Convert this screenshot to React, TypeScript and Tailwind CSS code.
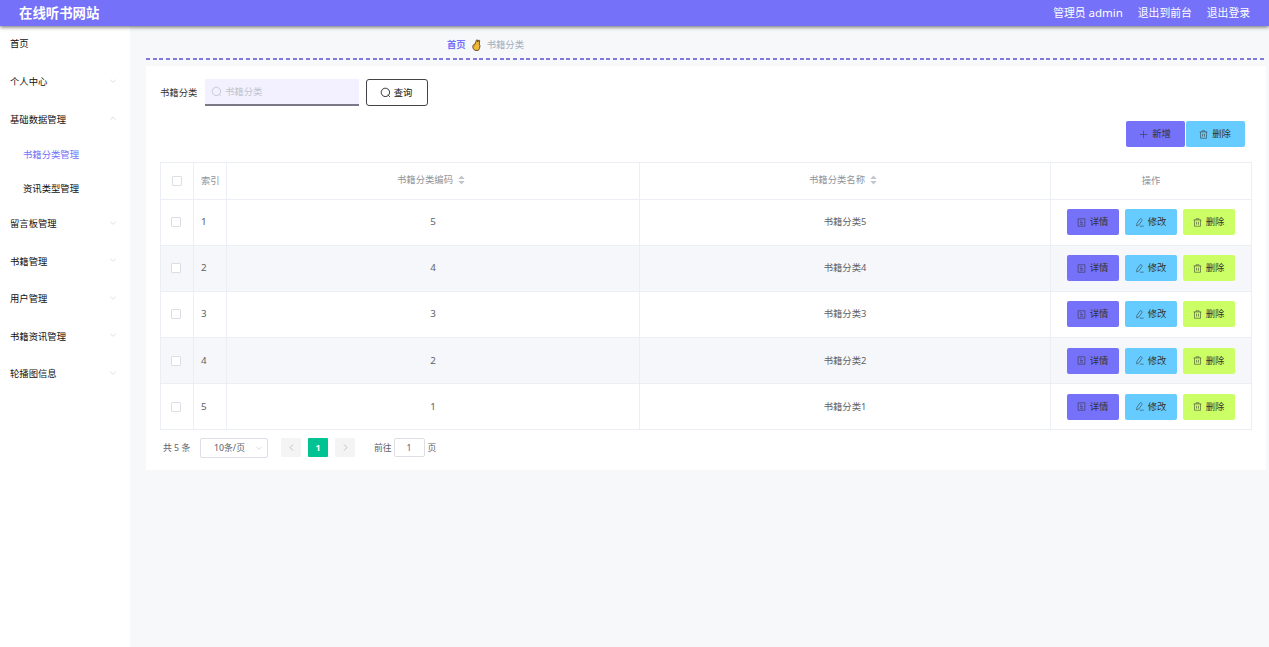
import type { ReactNode } from 'react';

const menus = [
  { name: '个人中心' },
  { name: '基础数据管理', open: true, children: ['书籍分类管理', '资讯类型管理'] },
  { name: '留言板管理' },
  { name: '书籍管理' },
  { name: '用户管理' },
  { name: '书籍资讯管理' },
  { name: '轮播图信息' },
];

const rows = [
  { index: 1, code: 5, name: '书籍分类5' },
  { index: 2, code: 4, name: '书籍分类4' },
  { index: 3, code: 3, name: '书籍分类3' },
  { index: 4, code: 2, name: '书籍分类2' },
  { index: 5, code: 1, name: '书籍分类1' },
];

const paths = {
  up: 'M2 8.5 6 4.5l4 4',
  down: 'M2 4 6 8l4-4',
  left: 'M8 2 4 6l4 4',
  right: 'M4 2l4 4-4 4',
  plus: 'M6 1v10M1 6h10',
  search: 'M8.7 9.5A4.6 4.6 0 1 1 9.5 8.7M8.4 8.4l2.4 2.4',
  trash: 'M.8 2.6h10.4M4 2.6V1h4v1.6M2 2.6V11h8V2.6M4.7 5v3.8M7.3 5v3.8',
  detail: 'M1.5 1h9v10h-9zM4 3.8h2.5M4 6h4M4 8.3h4',
  edit: 'M2.4 7.4 6.7 1.2Q7.4.5 8.2 1L9.2 1.8Q9.9 2.4 9.4 3.2L5.1 9.3 2.2 10.6zM6.5 10.9h5',
};

function Icon({ name, className }: { name: keyof typeof paths; className?: string }) {
  return (
    <svg viewBox="0 0 12 12" fill="none" stroke="currentColor" strokeWidth="0.9" className={`shrink-0 ${className}`}>
      <path d={paths[name]} />
    </svg>
  );
}

function Hand() {
  return (
    <svg viewBox="0 0 9 12" className="mx-[6px] h-[12px] w-[9px]">
      <path
        d="M2 5.2 3.3 5 4.3 1.2Q5 .3 5.6 1.1L5.7 3 6.6 1.3Q7.6.8 7.7 1.8L7.2 5 8 6.8 7.5 9.5 6.3 11.4H3L1 9.5.8 7Z"
        fill="#f0b93a"
        stroke="#4a3512"
        strokeWidth="0.8"
      />
      <path d="M2.5 5.5v2" fill="none" stroke="#a8700f" strokeWidth="0.6" />
    </svg>
  );
}

function Checkbox() {
  return <span className="block h-[10px] w-[10px] rounded-[1px] border border-[#dcdfe6] bg-white" />;
}

function Sort() {
  return (
    <svg viewBox="0 0 7 10" className="ml-[5px] h-[10px] w-[7px] fill-[#c0c4cc]">
      <path d="M.3 4 3.5.6 6.7 4zM.3 6 3.5 9.4 6.7 6z" />
    </svg>
  );
}

function Action({ icon, color, children }: { icon: keyof typeof paths; color: string; children: ReactNode }) {
  return (
    <button className={`flex h-[26px] items-center justify-center gap-[4px] rounded-[2px] pr-px text-[#333] ${color}`}>
      <Icon name={icon} className="h-[9px] w-[9px] opacity-80" />
      {children}
    </button>
  );
}

const grid = 'grid grid-cols-[33px_33px_413px_411px_1fr]';
const cell = 'flex items-center border-r border-[#ebeef5]';

export default function App() {
  return (
    <div className="flex h-[647px] w-[1269px] flex-col overflow-hidden bg-[#f6f8fa] font-['Noto_Sans','Noto_Sans_CJK_SC',sans-serif] text-[9.33px] leading-[14px] text-[#606266]">
      <header className="relative z-10 flex h-[26px] shrink-0 items-center justify-between bg-[#7571f9] pr-[19px] pl-[19px] text-white shadow-[0_1px_4px_rgba(0,0,0,0.6)]">
        <h1 className="text-[13.4px] font-bold">在线听书网站</h1>
        <nav className="flex gap-[15px] text-[10.8px]">
          <span>
            管理员 <span className="text-[11.5px]">admin</span>
          </span>
          <span>退出到前台</span>
          <span>退出登录</span>
        </nav>
      </header>

      <div className="flex flex-1">
        <aside className="w-[130px] shrink-0 bg-white text-[#111]">
          <div className="flex h-[37.5px] items-center pb-[2px] pl-[10px]">首页</div>
          {menus.map((menu) => (
            <div key={menu.name}>
              <div className="flex h-[37.5px] items-center justify-between pr-[13px] pl-[10px]">
                {menu.name}
                <Icon name={menu.open ? 'up' : 'down'} className="mb-[3px] h-[8px] w-[8px] text-[#c9cbd0]" />
              </div>
              {menu.children?.map((child, i) => (
                <div
                  key={child}
                  className={`flex h-[33.5px] items-center pl-[23px] ${i === 0 ? 'pb-px text-[#7571f9]' : ''}`}
                >
                  {child}
                </div>
              ))}
            </div>
          ))}
        </aside>

        <main className="flex-1 pr-[3px] pl-[16px]">
          <div className="flex h-[31.5px] items-center pt-[6px] pl-[301px]">
            <span className="font-bold text-[#7571f9]">首页</span>
            <Hand />
            <span className="text-[#a4adbd]">书籍分类</span>
          </div>
          <div className="h-[2px] bg-[repeating-linear-gradient(90deg,#7f7bd6_0_4px,transparent_4px_6.67px)]" />

          <section className="mt-[6.5px] h-[404px] bg-white px-[14px] pt-[13px]">
            <div className="flex items-center">
              <span className="w-[45px] text-[#333]">书籍分类</span>
              <div className="flex h-[27px] w-[154px] items-center gap-[3px] border-b-2 border-[#7b7988] bg-[#f3f1ff] pl-[6px] text-[#c0c4cc]">
                <Icon name="search" className="h-[11px] w-[11px]" />
                书籍分类
              </div>
              <button className="ml-[7px] flex h-[27px] w-[62px] items-center justify-center gap-[3px] rounded-[3px] border border-[#444] pr-[2px] text-[#111]">
                <Icon name="search" className="h-[11px] w-[11px]" />
                查询
              </button>
            </div>

            <div className="mt-[15px] mr-[7px] grid grid-cols-[59px_59px] justify-end gap-px">
              <Action icon="plus" color="bg-[#7571f9]">新增</Action>
              <Action icon="trash" color="bg-[#66ccff]">删除</Action>
            </div>

            <div className="mt-[15px] w-[1092px] border-t border-l border-[#ebeef5]">
              <div className={`${grid} h-[36.5px] border-b border-[#ebeef5] text-[#909399]`}>
                <div className={`${cell} justify-center`}><Checkbox /></div>
                <div className={`${cell} pl-[7px]`}>索引</div>
                <div className={`${cell} justify-center pr-[4px] pb-px`}>书籍分类编码<Sort /></div>
                <div className={`${cell} justify-center pr-[4px] pb-px`}>书籍分类名称<Sort /></div>
                <div className={`${cell} justify-center`}>操作</div>
              </div>
              {rows.map((row, i) => (
                <div
                  key={row.index}
                  className={`${grid} h-[46.2px] border-b border-[#ebeef5] ${i % 2 ? 'bg-[#f5f7fb]' : ''}`}
                >
                  <div className={`${cell} pl-[10px]`}><Checkbox /></div>
                  <div className={`${cell} pl-[7px] text-[9.8px]`}>{row.index}</div>
                  <div className={`${cell} justify-center text-[9.8px]`}>{row.code}</div>
                  <div className={`${cell} justify-center`}>{row.name}</div>
                  <div className={`${cell} justify-center`}>
                    <div className="grid grid-cols-[52px_52px_52px] gap-[6px]">
                      <Action icon="detail" color="bg-[#7571f9]">详情</Action>
                      <Action icon="edit" color="bg-[#66ccff]">修改</Action>
                      <Action icon="trash" color="bg-[#ccff66]">删除</Action>
                    </div>
                  </div>
                </div>
              ))}
            </div>

            <div className="mt-[7.5px] flex h-[20px] items-center pl-[3px] text-[8.8px]">
              <span className="w-[37px] whitespace-nowrap">共 5 条</span>
              <div className="flex h-[20px] w-[68px] items-center justify-between rounded-[2px] border border-[#dcdfe6] pr-[4px] pl-[13px]">
                10条/页
                <Icon name="down" className="h-[8px] w-[8px] text-[#c0c4cc]" />
              </div>
              <div className="ml-[13px] flex gap-[7px]">
                <button className="flex h-[19px] w-[20px] items-center justify-center rounded-[1px] bg-[#f4f4f5] text-[#a4a8af]">
                  <Icon name="left" className="h-[9px] w-[9px]" />
                </button>
                <button className="h-[19px] w-[20px] rounded-[1px] bg-[#00c292] font-bold text-white">1</button>
                <button className="flex h-[19px] w-[20px] items-center justify-center rounded-[1px] bg-[#f4f4f5] text-[#a4a8af]">
                  <Icon name="right" className="h-[9px] w-[9px]" />
                </button>
              </div>
              <span className="ml-[19px]">前往</span>
              <span className="mr-[3px] ml-[2px] flex h-[19px] w-[31px] items-center justify-center rounded-[2px] border border-[#dcdfe6]">
                1
              </span>
              <span>页</span>
            </div>
          </section>
        </main>
      </div>
    </div>
  );
}
